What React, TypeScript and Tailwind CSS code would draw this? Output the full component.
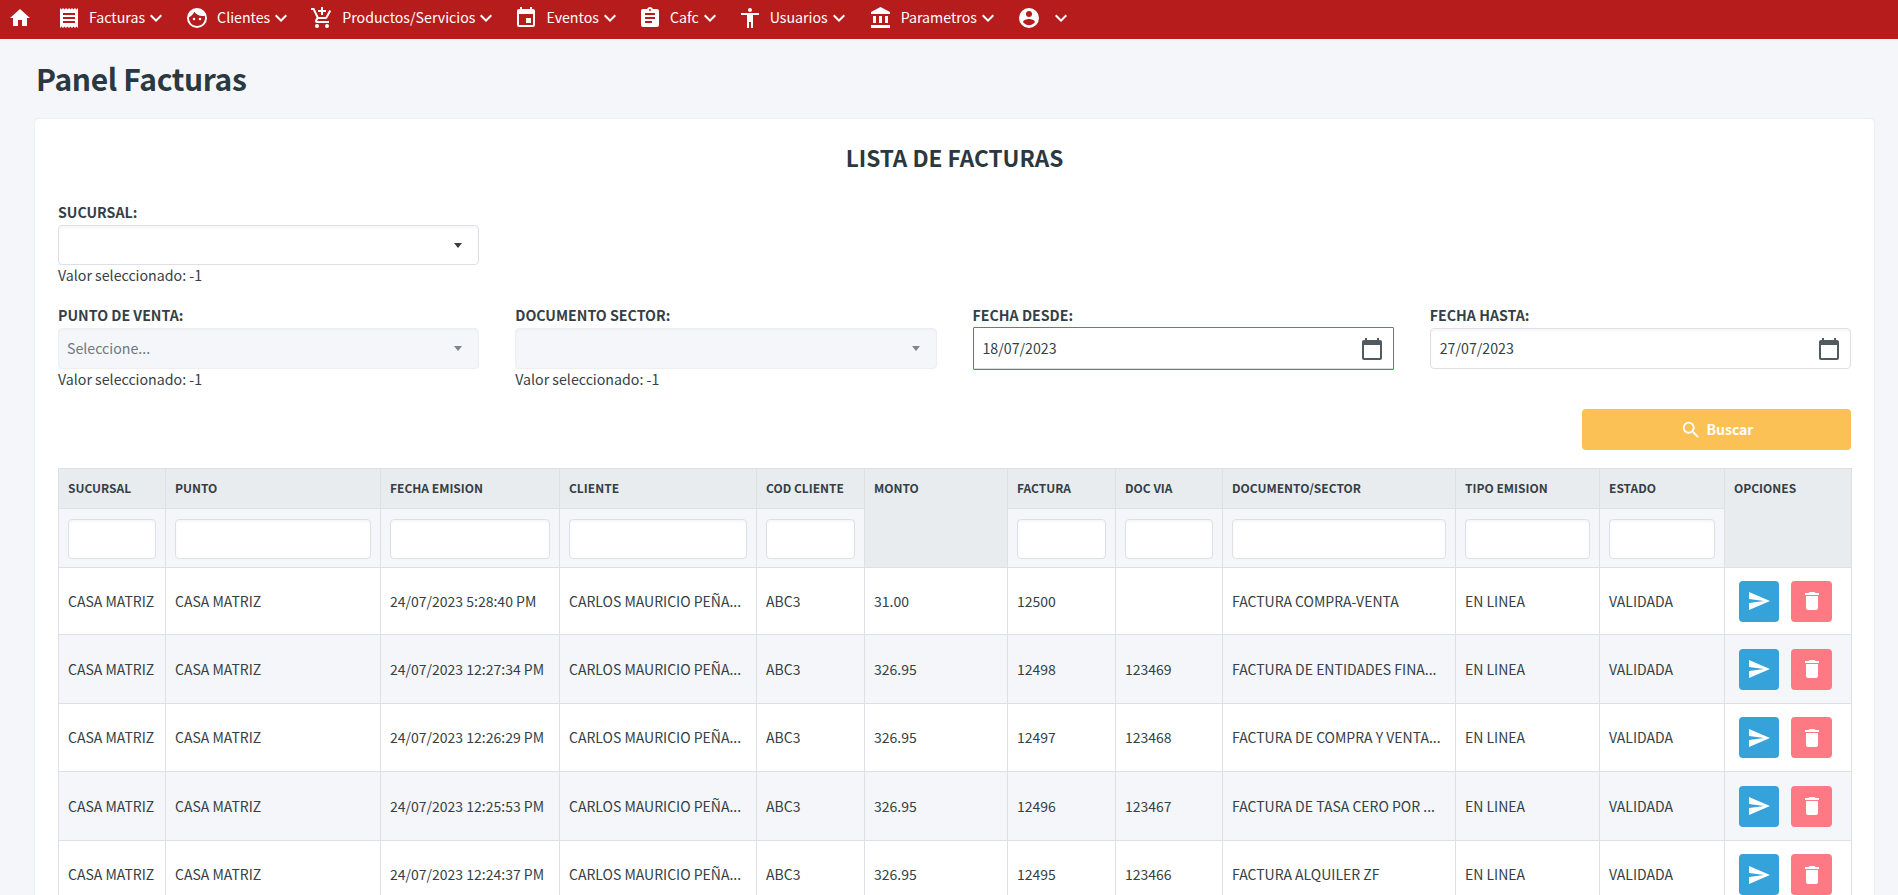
import React from "react";

const font = "font-['Noto_Sans_CJK_SC','Noto_Sans',sans-serif]";

const P = {
  home: "M10,20V14H14V20H19V12H22L12,3L2,12H5V20H10Z",
  receipt: "M3,22L4.5,20.5L6,22L7.5,20.5L9,22L10.5,20.5L12,22L13.5,20.5L15,22L16.5,20.5L18,22L19.5,20.5L21,22V2L19.5,3.5L18,2L16.5,3.5L15,2L13.5,3.5L12,2L10.5,3.5L9,2L7.5,3.5L6,2L4.5,3.5L3,2M18,9H6V7H18M18,13H6V11H18M18,17H6V15H18V17Z",
  face: "M9,11.75A1.25,1.25 0 0,0 7.75,13A1.25,1.25 0 0,0 9,14.25A1.25,1.25 0 0,0 10.25,13A1.25,1.25 0 0,0 9,11.75M15,11.75A1.25,1.25 0 0,0 13.75,13A1.25,1.25 0 0,0 15,14.25A1.25,1.25 0 0,0 16.25,13A1.25,1.25 0 0,0 15,11.75M12,2A10,10 0 0,0 2,12A10,10 0 0,0 12,22A10,10 0 0,0 22,12A10,10 0 0,0 12,2M12,20C7.59,20 4,16.41 4,12C4,11.71 4,11.42 4.05,11.14C6.41,10.09 8.28,8.16 9.26,5.77C11.07,8.33 14.05,10 17.42,10C18.2,10 18.95,9.91 19.67,9.74C19.88,10.45 20,11.21 20,12C20,16.41 16.41,20 12,20Z",
  cart: "M11,9H13V6H16V4H13V1H11V4H8V6H11M7,18A2,2 0 0,0 5,20A2,2 0 0,0 7,22A2,2 0 0,0 9,20A2,2 0 0,0 7,18M17,18A2,2 0 0,0 15,20A2,2 0 0,0 17,22A2,2 0 0,0 19,20A2,2 0 0,0 17,18M7.17,14.75L7.2,14.63L8.1,13H15.55C16.3,13 16.96,12.59 17.3,11.97L21.16,4.96L19.42,4H19.41L18.31,6L15.55,11H8.53L8.4,10.73L6.16,6L5.21,4L4.27,2H1V4H3L6.6,11.59L5.25,14.04C5.09,14.32 5,14.65 5,15A2,2 0 0,0 7,17H19V15H7.42C7.29,15 7.17,14.89 7.17,14.75Z",
  calendar: "M19,19H5V8H19M16,1V3H8V1H6V3H5C3.89,3 3,3.89 3,5V19A2,2 0 0,0 5,21H19A2,2 0 0,0 21,19V5C21,3.89 20.1,3 19,3H18V1M17,12H12V17H17V12Z",
  clipboard: "M17,9H7V7H17M17,13H7V11H17M14,17H7V15H14M12,3A1,1 0 0,1 13,4A1,1 0 0,1 12,5A1,1 0 0,1 11,4A1,1 0 0,1 12,3M19,3H14.82C14.4,1.84 13.3,1 12,1C10.7,1 9.6,1.84 9.18,3H5A2,2 0 0,0 3,5V19A2,2 0 0,0 5,21H19A2,2 0 0,0 21,19V5A2,2 0 0,0 19,3Z",
  human: "M21,9H15V22H13V16H11V22H9V9H3V7H21M12,2A2,2 0 0,1 14,4A2,2 0 0,1 12,6C10.89,6 10,5.1 10,4C10,2.89 10.89,2 12,2Z",
  bank: "M11.5,1L2,6V8H21V6M16,10V17H19V10M2,22H21V19H2M10,10V17H13V10M4,10V17H7V10H4Z",
  account: "M12,19.2C9.5,19.2 7.29,17.92 6,16C6.03,14 10,12.9 12,12.9C14,12.9 17.97,14 18,16C16.71,17.92 14.5,19.2 12,19.2M12,5A3,3 0 0,1 15,8A3,3 0 0,1 12,11A3,3 0 0,1 9,8A3,3 0 0,1 12,5M12,2A10,10 0 0,0 2,12A10,10 0 0,0 12,22A10,10 0 0,0 22,12A10,10 0 0,0 12,2Z",
  chevron: "M7.41,8.58L12,13.17L16.59,8.58L18,10L12,16L6,10L7.41,8.58Z",
  send: "M2,21L23,12L2,3V10L17,12L2,14V21Z",
  trash: "M19,4H15.5L14.5,3H9.5L8.5,4H5V6H19M6,19A2,2 0 0,0 8,21H16A2,2 0 0,0 18,19V7H6V19Z",
  magnify: "M9.5,3A6.5,6.5 0 0,1 16,9.5C16,11.11 15.41,12.59 14.44,13.73L14.71,14H15.5L20.5,19L19,20.5L14,15.5V14.71L13.73,14.44C12.59,15.41 11.11,16 9.5,16A6.5,6.5 0 0,1 3,9.5A6.5,6.5 0 0,1 9.5,3M9.5,5C7,5 5,7 5,9.5C5,12 7,14 9.5,14C12,14 14,12 14,9.5C14,7 12,5 9.5,5Z",
  native: "M20 3h-1V1h-2v2H7V1H5v2H4c-1.1 0-2 .9-2 2v16c0 1.1.9 2 2 2h16c1.1 0 2-.9 2-2V5c0-1.1-.9-2-2-2zm0 18H4V8h16v13z",
};

function Icon({ d, size = 24, className = "" }: { d: string; size?: number; className?: string }) {
  return (
    <svg width={size} height={size} viewBox="0 0 24 24" fill="currentColor" className={`shrink-0 ${className}`}>
      <path d={d} />
    </svg>
  );
}

const nav: [string, string, string][] = [
  [P.receipt, "Facturas", "ml-[25px]"],
  [P.face, "Clientes", "ml-[17px]"],
  [P.cart, "Productos/Servicios", "ml-[17px]"],
  [P.calendar, "Eventos", "ml-[16px]"],
  [P.clipboard, "Cafc", "ml-[16px]"],
  [P.human, "Usuarios", "ml-[16px]"],
  [P.bank, "Parametros", "ml-[18px]"],
];

const cols = [107, 215, 179, 197, 108, 143, 108, 107, 233, 144, 125, 127];
const heads = ["SUCURSAL", "PUNTO", "FECHA EMISION", "CLIENTE", "COD CLIENTE", "MONTO", "FACTURA", "DOC VIA", "DOCUMENTO/SECTOR", "TIPO EMISION", "ESTADO", "OPCIONES"];
const rows = [
  ["24/07/2023 5:28:40 PM", "31.00", "12500", "", "FACTURA COMPRA-VENTA"],
  ["24/07/2023 12:27:34 PM", "326.95", "12498", "123469", "FACTURA DE ENTIDADES FINA..."],
  ["24/07/2023 12:26:29 PM", "326.95", "12497", "123468", "FACTURA DE COMPRA Y VENTA..."],
  ["24/07/2023 12:25:53 PM", "326.95", "12496", "123467", "FACTURA DE TASA CERO POR ..."],
  ["24/07/2023 12:24:37 PM", "326.95", "12495", "123466", "FACTURA ALQUILER ZF"],
];
const rowHeights = ["h-[67px]", "h-[69px]", "h-[68px]", "h-[69px]", "h-[68px]"];

function Caret({ muted }: { muted?: boolean }) {
  return (
    <span className={`w-0 h-0 border-x-[4.5px] border-x-transparent border-t-[5px] ${muted ? "border-t-[#7d868c]" : "border-t-[#343f46]"}`} />
  );
}

function Select({ text, disabled, h }: { text?: string; disabled?: boolean; h: string }) {
  return (
    <div className={`${h} flex items-center justify-between rounded-[4px] border pl-[8px] pr-[16px] text-[14.2px] ${disabled ? "bg-[#f4f6f9] border-[#eceef2] text-[#70787f] shadow-[inset_0_2px_3px_rgba(0,0,0,0.02)]" : "bg-white border-[#dde1e5] shadow-[inset_0_2px_3px_rgba(0,0,0,0.04)]"}`}>
      <span>{text}</span>
      <Caret muted={disabled} />
    </div>
  );
}

function DateField({ value, active }: { value: string; active?: boolean }) {
  return (
    <div className={`flex items-center justify-between pl-[9px] pr-[9px] text-[14.2px] bg-white ${active ? "h-[43px] -mt-[1px] border border-[#28a745] rounded-[1px] shadow-[inset_0_-1px_0_#ddd]" : "h-[41px] border border-[#dde1e5] rounded-[4px] shadow-[inset_0_2px_3px_rgba(0,0,0,0.04)]"}`}>
      <span>{value}</span>
      <Icon d={P.native} className="text-[#505a61]" />
    </div>
  );
}

const Label = ({ children }: { children: React.ReactNode }) => (
  <div className="h-[25px] flex items-center text-[14.2px] font-bold text-[#343f46] leading-none">{children}</div>
);
const Selected = () => <div className="h-[21px] flex items-center text-[14.2px] text-[#343f46] leading-none">Valor seleccionado: -1</div>;

function FilterInput() {
  return <div className="h-[40px] w-full rounded-[4px] border border-[#dde1e5] bg-white shadow-[inset_0_2px_3px_rgba(0,0,0,0.04)]" />;
}

export default function App() {
  return (
    <div className={`h-[895px] w-full overflow-hidden bg-[#f4f6f9] text-[#343f46] ${font}`}>
      <nav className="h-[39px] pb-[3px] bg-[#b71c1c] text-white flex items-center pl-[8px] text-[14.2px]">
        <Icon d={P.home} />
        {nav.map(([d, label, ml]) => (
          <div key={label} className={`flex items-center ${ml}`}>
            <Icon d={d} className="mr-[8px]" />
            <span>{label}</span>
            <Icon d={P.chevron} className="-ml-[1px]" />
          </div>
        ))}
        <div className="flex items-center ml-[17px]">
          <Icon d={P.account} className="mr-[8px]" />
          <Icon d={P.chevron} />
        </div>
      </nav>

      <h1 className="h-[80px] pb-[2px] pl-[36px] flex items-center text-[30px] font-bold leading-none tracking-[-0.35px] text-[#2b3840]">Panel Facturas</h1>

      <section className="ml-[35px] w-[1839px] rounded-[4px] bg-white shadow-[0_0_2px_rgba(0,0,0,0.12)] pl-[23px] pr-[23px]">
        <h2 className="h-[80px] pb-[2px] flex items-center justify-center text-[22.6px] font-bold text-[#2b3840] leading-none">LISTA DE FACTURAS</h2>

        <div className="grid grid-cols-4 gap-x-[36px]">
          <div className="pt-[1px]">
            <Label>SUCURSAL:</Label>
            <Select h="h-[40px]" />
            <Selected />
          </div>
        </div>

        <div className="grid grid-cols-4 gap-x-[36px] mt-[17px]">
          <div>
            <Label>PUNTO DE VENTA:</Label>
            <Select text="Seleccione..." disabled h="h-[41px]" />
            <Selected />
          </div>
          <div>
            <Label>DOCUMENTO SECTOR:</Label>
            <Select disabled h="h-[41px]" />
            <Selected />
          </div>
          <div>
            <Label>FECHA DESDE:</Label>
            <DateField value="18/07/2023" active />
          </div>
          <div>
            <Label>FECHA HASTA:</Label>
            <DateField value="27/07/2023" />
          </div>
        </div>

        <div className="flex justify-end mt-[19px]">
          <button className="w-[269px] h-[41px] rounded-[4px] bg-[#fbc155] text-white font-bold text-[14px] flex items-center justify-center gap-[5px]">
            <Icon d={P.magnify} size={22} />
            Buscar
          </button>
        </div>

        <table className="mt-[18px] table-fixed border-collapse text-[14px] w-[1793px]">
          <colgroup>
            {cols.map((w, i) => <col key={i} style={{ width: w }} />)}
          </colgroup>
          <thead>
            <tr className="h-[40px] bg-[#e9ecef] text-[12px] font-bold text-left">
              {heads.map((h, i) => (
                <th key={h} rowSpan={i === 5 || i === 11 ? 2 : 1} className="border border-[#dde1e5] px-[9px] align-top pt-[10px] whitespace-nowrap">{h}</th>
              ))}
            </tr>
            <tr className="h-[59px] bg-[#f4f6f9]">
              {heads.map((h, i) => i === 5 || i === 11 ? null : (
                <th key={h} className="border-x border-[#dde1e5] px-[9px] pt-[10px] pb-[8px]"><FilterInput /></th>
              ))}
            </tr>
          </thead>
          <tbody>
            {rows.map((r, i) => (
              <tr key={i} className={`${rowHeights[i]} ${i % 2 ? "bg-[#f4f6f9]" : "bg-white"}`}>
                {["CASA MATRIZ", "CASA MATRIZ", r[0], "CARLOS MAURICIO PEÑA...", "ABC3", r[1], r[2], r[3], r[4], "EN LINEA", "VALIDADA"].map((c, j) => (
                  <td key={j} className={`border border-[#dde1e5] pl-[9px] whitespace-nowrap overflow-hidden ${j === 0 ? "pr-0" : "pr-[9px]"}`}>{c}</td>
                ))}
                <td className="border border-[#dde1e5] pl-[14px]">
                  <div className="flex gap-[12px]">
                    <button className="w-[40px] h-[41px] rounded-[4px] bg-[#36a2da] text-white flex items-center justify-center"><Icon d={P.send} /></button>
                    <button className="w-[41px] h-[41px] rounded-[4px] bg-[#fd7a84] text-white flex items-center justify-center"><Icon d={P.trash} /></button>
                  </div>
                </td>
              </tr>
            ))}
          </tbody>
        </table>
      </section>
    </div>
  );
}
